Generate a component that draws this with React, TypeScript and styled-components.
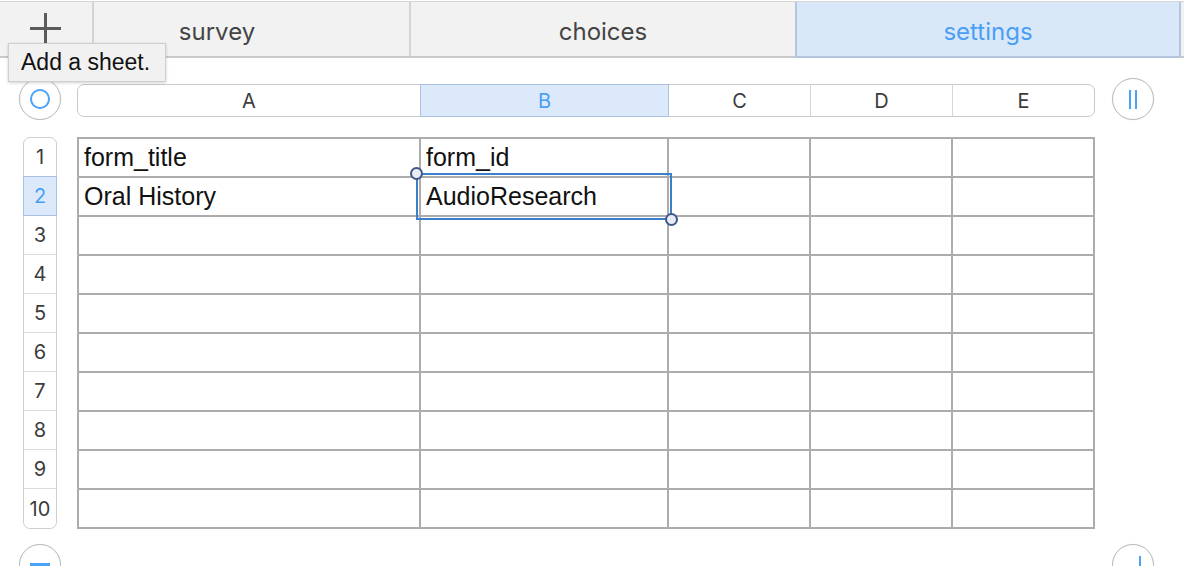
import * as React from 'react'
import styled, { createGlobalStyle } from 'styled-components'

const GlobalStyle = createGlobalStyle`
  html, body {
    margin: 0;
    padding: 0;
    background: #ffffff;
    overflow: hidden;
  }
  * { box-sizing: border-box; }
`

const COLUMNS = ['A', 'B', 'C', 'D', 'E']
const ROWS = [1, 2, 3, 4, 5, 6, 7, 8, 9, 10]
const CELLS: Record<string, string> = {
  A1: 'form_title',
  B1: 'form_id',
  A2: 'Oral History',
  B2: 'AudioResearch'
}
const ACTIVE_COL = 'B'
const ACTIVE_ROW = 2

const Page = styled.div`
  position: relative;
  width: 1184px;
  height: 566px;
  font-family: Inter, "Liberation Sans", sans-serif;
`

const TabBar = styled.div`
  position: relative;
  display: flex;
  height: 58px;
  padding-top: 1px;
  background: #ffffff;
`

const TabStrip = styled.div`
  display: flex;
  flex: 1;
  border-top: 1px solid #d6d6d6;
  border-bottom: 2px solid #c9c9c9;
  background: #f2f2f2;
  padding-left: 23px;
`

const Tab = styled.div<{ $active?: boolean }>`
  flex: 0 0 386px;
  display: flex;
  align-items: center;
  justify-content: center;
  padding-top: 4px;
  font-size: 24px;
  color: ${p => (p.$active ? '#4a9ff5' : '#444444')};
  background: ${p => (p.$active ? '#d9e8f9' : 'transparent')};
  border-left: 2px solid ${p => (p.$active ? '#b4c6de' : '#d4d4d4')};
  border-right: ${p => (p.$active ? '2px solid #b4c6de' : 'none')};
  margin-bottom: ${p => (p.$active ? '-2px' : '0')};
  border-bottom: ${p => (p.$active ? '2px solid #b4c6de' : 'none')};
`

const AddTab = styled.div`
  position: absolute;
  left: 0;
  top: 2px;
  width: 94px;
  height: 54px;
  display: flex;
  align-items: center;
  justify-content: center;
  background: #f2f2f2;
  border-right: 2px solid #d4d4d4;
`

const Tooltip = styled.div`
  position: absolute;
  left: 8px;
  top: 43px;
  z-index: 5;
  width: 158px;
  height: 39px;
  padding: 0 0 0 12px;
  display: flex;
  align-items: center;
  background: #f1f1f1;
  border: 1px solid #cfcfcf;
  box-shadow: 0 1px 3px rgba(0, 0, 0, 0.18);
  font-family: "Liberation Sans", Arial, sans-serif;
  font-size: 23px;
  color: #111111;
`

const Body = styled.div`
  display: grid;
  grid-template-columns: 77px 1018px 1fr;
  grid-template-rows: 42px 409px auto;
  padding-top: 20px;
`

const RoundButton = styled.div<{ $offset: number }>`
  position: relative;
  width: 42px;
  height: 42px;
  margin-left: ${p => p.$offset}px;
  border-radius: 50%;
  border: 1px solid #bdbdbd;
  background: #ffffff;
  box-shadow: 0 0 1px rgba(0, 0, 0, 0.15);
  display: flex;
  align-items: center;
  justify-content: center;
`

const BottomButton = styled(RoundButton)`
  margin-top: 15px;
`

const Ring = styled.div`
  width: 20px;
  height: 20px;
  border-radius: 50%;
  border: 2px solid #4aa3f8;
`

const Bars = styled.div`
  display: flex;
  gap: 4px;
  height: 19px;
`

const Bar = styled.div`
  width: 2px;
  height: 100%;
  background: #4aa3f8;
`

const Minus = styled.div`
  width: 20px;
  height: 3px;
  margin-top: -1px;
  background: #4aa3f8;
`

const Stick = styled.div`
  position: absolute;
  left: 26px;
  top: 11px;
  width: 2px;
  height: 20px;
  background: #4aa3f8;
`

const ColumnHeader = styled.div`
  display: grid;
  grid-template-columns: 342px 247px 141px 141px 141px;
  gap: 1px;
  height: 33px;
  margin-top: 6px;
  border: 1px solid #cbcbcb;
  border-radius: 7px;
  background: #d6d6d6;
`

const HeaderCell = styled.div<{ $active?: boolean }>`
  display: flex;
  align-items: center;
  justify-content: center;
  font-size: 20px;
  color: ${p => (p.$active ? '#4a9ff5' : '#3c3c3c')};
  background: ${p => (p.$active ? '#dce9fa' : '#ffffff')};
  box-shadow: ${p => (p.$active ? '0 0 0 1px #a9c2e2' : 'none')};
  position: relative;
  &:first-child { border-radius: 6px 0 0 6px; }
  &:last-child { border-radius: 0 6px 6px 0; }
`

const RowNumbers = styled.div`
  align-self: end;
  width: 34px;
  margin-left: 23px;
  display: grid;
  grid-template-rows: repeat(9, 38px) 39px;
  gap: 1px;
  border: 1px solid #cfcfcf;
  border-radius: 7px;
  background: #dcdcdc;
`

const RowNumber = styled.div<{ $active?: boolean }>`
  display: flex;
  align-items: center;
  justify-content: center;
  font-size: 20px;
  color: ${p => (p.$active ? '#4a9ff5' : '#3c3c3c')};
  background: ${p => (p.$active ? '#dce9fa' : '#ffffff')};
  box-shadow: ${p => (p.$active ? '0 0 0 1px #a9c2e2' : 'none')};
  position: relative;
  &:first-child { border-radius: 6px 6px 0 0; }
  &:last-child { border-radius: 0 0 6px 6px; }
`

const SheetWrap = styled.div`
  position: relative;
  align-self: end;
`

const Sheet = styled.div`
  display: grid;
  grid-template-columns: 340px 246px 140px 140px 140px;
  grid-auto-rows: 37px;
  gap: 2px;
  padding: 2px;
  background: #acacac;
`

const Cell = styled.div`
  display: flex;
  align-items: center;
  padding: 0 5px;
  background: #ffffff;
  font-family: "Liberation Sans", Arial, sans-serif;
  font-size: 25px;
  color: #111111;
  white-space: nowrap;
  overflow: hidden;
`

const Selection = styled.div`
  position: absolute;
  left: 339px;
  top: 36px;
  width: 256px;
  height: 47px;
  border: 2px solid #3c7fc9;
`

const Handle = styled.div<{ $corner: 'start' | 'end' }>`
  position: absolute;
  width: 13px;
  height: 13px;
  border-radius: 50%;
  background: #e8ecf4;
  border: 2px solid #3e5889;
  ${p => (p.$corner === 'start' ? 'left: -8px; top: -8px;' : 'right: -8px; bottom: -8px;')}
`

const Spacer = styled.div``

function PlusIcon () {
  return (
    <svg width='32' height='32' viewBox='0 0 32 32'>
      <path d='M0 15.5H31M15.5 0V31' stroke='#5a5a5a' strokeWidth='3' fill='none' />
    </svg>
  )
}

export default function App () {
  return (
    <Page>
      <GlobalStyle />
      <TabBar>
        <TabStrip>
          <Tab>survey</Tab>
          <Tab>choices</Tab>
          <Tab $active>settings</Tab>
        </TabStrip>
        <AddTab><PlusIcon /></AddTab>
        <Tooltip>Add a sheet.</Tooltip>
      </TabBar>

      <Body>
        <RoundButton $offset={19}><Ring /></RoundButton>
        <ColumnHeader>
          {COLUMNS.map(c => (
            <HeaderCell key={c} $active={c === ACTIVE_COL}>{c}</HeaderCell>
          ))}
        </ColumnHeader>
        <RoundButton $offset={17}><Bars><Bar /><Bar /></Bars></RoundButton>

        <RowNumbers>
          {ROWS.map(r => (
            <RowNumber key={r} $active={r === ACTIVE_ROW}>{r}</RowNumber>
          ))}
        </RowNumbers>
        <SheetWrap>
          <Sheet>
            {ROWS.map(r => COLUMNS.map(c => (
              <Cell key={c + r}>{CELLS[c + r] || ''}</Cell>
            )))}
          </Sheet>
          <Selection>
            <Handle $corner='start' />
            <Handle $corner='end' />
          </Selection>
        </SheetWrap>
        <Spacer />

        <BottomButton $offset={19}><Minus /></BottomButton>
        <Spacer />
        <BottomButton $offset={17}><Stick /></BottomButton>
      </Body>
    </Page>
  )
}
